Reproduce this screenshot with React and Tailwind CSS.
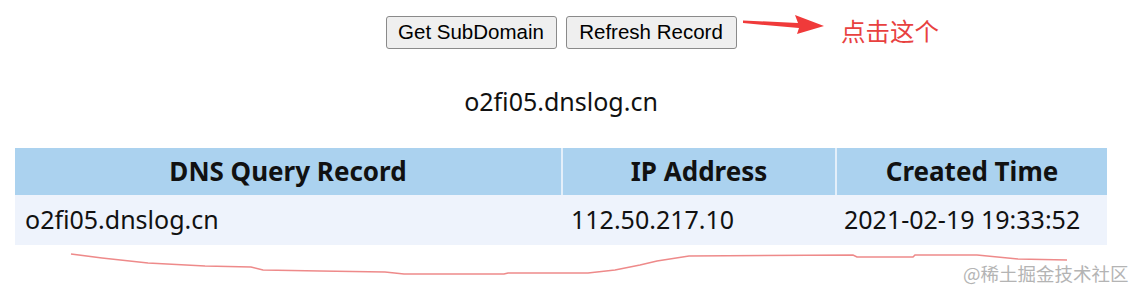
const rows = [
  { domain: "o2fi05.dnslog.cn", ip: "112.50.217.10", time: "2021-02-19 19:33:52" },
];

export default function App() {
  return (
    <div className="relative w-[1137px] h-[296px] overflow-hidden bg-white text-[#111]">
      <div className="w-[1122px] pt-[16px]">

        {/* BUTTONS */}
        <div className="flex justify-center gap-[9px] font-['Liberation_Sans',Arial,sans-serif]">
          <button className="h-[33px] w-[171px] border border-[#8a8a8a] rounded-[3px] bg-[#efefef] text-[20.5px] text-black">
            Get SubDomain
          </button>
          <button className="h-[33px] w-[171px] border border-[#8a8a8a] rounded-[3px] bg-[#efefef] text-[20.5px] text-black">
            Refresh Record
          </button>
        </div>

        {/* DOMAIN */}
        <p className="mt-[36px] text-center text-[25px] leading-[32px] font-['Noto_Sans',sans-serif]">
          o2fi05.dnslog.cn
        </p>

        {/* TABLE */}
        <div className="mt-[31px] px-[15px] font-['Noto_Sans',sans-serif]">
          <div className="grid grid-cols-[546px_274px_272px] h-[47px] bg-[#abd2ef] text-[26px] font-bold">
            <div className="flex items-center justify-center">DNS Query Record</div>
            <div className="flex items-center justify-center border-l-2 border-[#e3effa]">IP Address</div>
            <div className="flex items-center justify-center border-l-2 border-[#e3effa]">Created Time</div>
          </div>
          {rows.map((r) => (
            <div key={r.domain} className="grid grid-cols-[546px_274px_272px] h-[50px] bg-[#eef3fc] text-[25px]">
              <div className="flex items-center pl-[10px]">{r.domain}</div>
              <div className="flex items-center pl-[10px]">{r.ip}</div>
              <div className="flex items-center pl-[9px]">{r.time}</div>
            </div>
          ))}
        </div>
      </div>

      {/* ANNOTATION: arrow + note */}
      <svg className="absolute left-[740px] top-[12px]" width="90" height="26" viewBox="0 0 90 26">
        <polygon points="3,8.5 58,11 55,3 84,14 57,22 59,16 3,11" fill="#f03a3a" />
      </svg>
      <div className="absolute left-[841px] top-[14px] text-[24.5px] leading-[34px] text-[#e8413f] font-['Noto_Sans_CJK_SC',sans-serif]">
        点击这个
      </div>

      {/* ANNOTATION: underline scribble */}
      <svg className="absolute left-0 top-0" width="1137" height="296" viewBox="0 0 1137 296">
        <polyline
          fill="none"
          stroke="#ee8a8a"
          strokeWidth="1.6"
          points="71,254 102,258 148,263 205,266 251,267 263,270 320,271 385,272 404,274 504,274 508,273 588,273 615,270 640,265 657,261 689,256 853,255 857,257 913,257 915,255 977,255 1018,259 1067,260"
        />
      </svg>

      <div className="absolute left-[963px] top-[261px] text-[18.5px] leading-[24px] text-[#b4b4b4] font-['Noto_Sans_CJK_SC',sans-serif]">
        @稀土掘金技术社区
      </div>
    </div>
  );
}
